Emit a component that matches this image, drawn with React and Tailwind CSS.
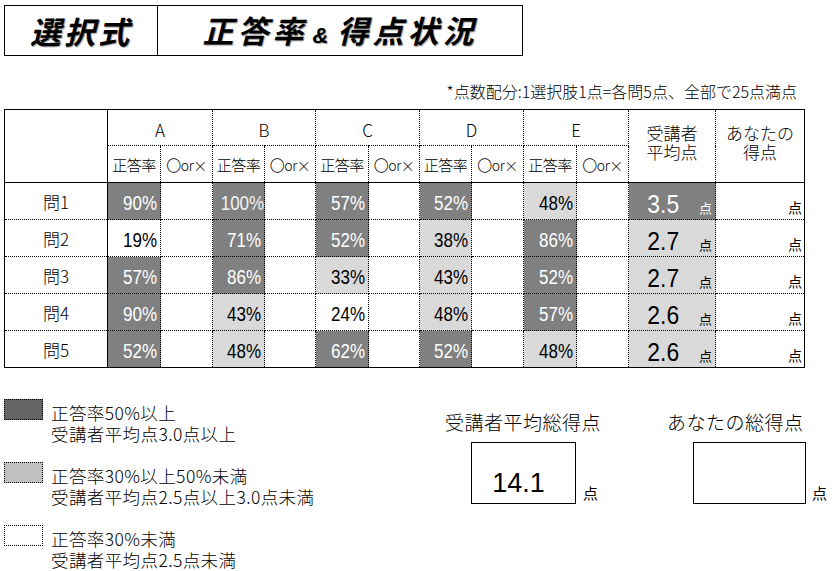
import React from "react"

const fills = {
  d: "bg-[#808080] text-white",
  l: "bg-[#d9d9d9] text-black",
  w: "bg-white text-black",
}

const rows = [
  { q: "問1", v: [[90, "d"], [100, "d"], [57, "d"], [52, "d"], [48, "l"]], avg: "3.5", ac: "d" },
  { q: "問2", v: [[19, "w"], [71, "d"], [52, "d"], [38, "l"], [86, "d"]], avg: "2.7", ac: "l" },
  { q: "問3", v: [[57, "d"], [86, "d"], [33, "l"], [43, "l"], [52, "d"]], avg: "2.7", ac: "l" },
  { q: "問4", v: [[90, "d"], [43, "l"], [24, "w"], [48, "l"], [57, "d"]], avg: "2.6", ac: "l" },
  { q: "問5", v: [[52, "d"], [48, "l"], [62, "d"], [52, "d"], [48, "l"]], avg: "2.6", ac: "l" },
]

const choices = ["A", "B", "C", "D", "E"]
const colWidths = ["w-[103px]", "w-[53px]", "w-[52px]", "w-[52px]", "w-[51px]", "w-[53px]", "w-[51px]", "w-[52px]", "w-[52px]", "w-[53px]", "w-[52px]", "w-[87px]", "w-[89px]"]

const legend = [
  { box: "bg-[#646464]", lines: ["正答率50%以上", "受講者平均点3.0点以上"] },
  { box: "bg-[#c0c0c0]", lines: ["正答率30%以上50%未満", "受講者平均点2.5点以上3.0点未満"] },
  { box: "bg-white", lines: ["正答率30%未満", "受講者平均点2.5点未満"] },
]

export default function App() {
  return (
    <div className="w-[832px] h-[571px] bg-white text-black font-['Noto_Sans_CJK_JP',sans-serif] overflow-hidden pt-[5px]">
      {/* タイトル */}
      <div className="ml-[4px] w-[519px] h-[51px] border border-black flex">
        <div className="w-[153px] border-r border-black flex items-center justify-center">
          <span className="text-[31px] leading-none font-bold italic tracking-[3px] [text-shadow:1px_1px_1px_#999]">選択式</span>
        </div>
        <div className="flex-1 flex items-center justify-center">
          <span className="text-[31px] leading-none font-bold italic tracking-[4px] [text-shadow:1px_1px_1px_#999] flex items-baseline">
            正答率
            <span className="text-[22px] mx-[5px] font-['Liberation_Sans',sans-serif]">&amp;</span>
            得点状況
          </span>
        </div>
      </div>

      <p className="mt-[25px] pr-[35px] text-right text-[16px] leading-[20px] font-light">
        *点数配分:1選択肢1点=各問5点、全部で25点満点
      </p>

      {/* 表 */}
      <table className="ml-[4px] mt-[8px] w-[801px] table-fixed border-collapse border border-black">
        <colgroup>
          {colWidths.map((w, i) => <col key={i} className={w} />)}
        </colgroup>
        <thead>
          <tr className="h-[36px]">
            <td rowSpan={2} className="border border-solid border-black p-0"></td>
            {choices.map(c => (
              <td key={c} colSpan={2} className="border border-dotted border-black p-0 pt-[4px] text-center text-[17px] font-light">{c}</td>
            ))}
            <td rowSpan={2} className="border border-black [border-style:solid_dotted_solid_dotted] p-0 pb-[8px] text-center text-[17px] leading-[19px] font-light">
              受講者<br />平均点
            </td>
            <td rowSpan={2} className="border border-black [border-style:solid_dotted_solid_dotted] p-0 pb-[8px] text-center text-[17px] leading-[19px] font-light">
              あなたの<br />得点
            </td>
          </tr>
          <tr className="h-[37px]">
            {choices.map(c => (
              <React.Fragment key={c}>
                <td className="border border-black [border-style:dotted_dotted_solid_dotted] p-0 pt-[2px] text-center text-[15px] tracking-[-0.5px] font-light">正答率</td>
                <td className="border border-black [border-style:dotted_dotted_solid_dotted] p-0 pt-[2px] text-center text-[14px] tracking-[-0.5px] font-light whitespace-nowrap">
                  <span className="text-[15px]">〇</span>or×
                </td>
              </React.Fragment>
            ))}
          </tr>
        </thead>
        <tbody>
          {rows.map(r => (
            <tr key={r.q} className="h-[37px]">
              <td className="border border-black [border-style:dotted_solid_dotted_dotted] p-0 pt-[2px] text-center text-[17px] font-light">{r.q}</td>
              {r.v.map(([pct, f], i) => (
                <React.Fragment key={i}>
                  <td className={`border border-dotted border-black p-0 pt-[3px] pr-[3px] text-right ${fills[f]}`}>
                    <span className={`inline-block origin-right scale-x-[0.85] text-[20px] leading-[24px] font-['Liberation_Sans',sans-serif] ${pct === 100 ? "text-[#f2f2f2]" : ""}`}>
                      {pct}%
                    </span>
                  </td>
                  <td className="border border-dotted border-black p-0"></td>
                </React.Fragment>
              ))}
              <td className={`border border-dotted border-black p-0 ${fills[r.ac]}`}>
                <div className="flex items-baseline justify-end pr-[3px] pt-[5px]">
                  <span className="inline-block origin-right scale-x-[0.88] text-[26px] leading-[28px] font-['Liberation_Sans',sans-serif]">{r.avg}</span>
                  <span className="ml-[20px] text-[13px] leading-[14px]">点</span>
                </div>
              </td>
              <td className="border border-dotted border-black p-0 pr-[2px] pt-[12px] text-right text-[14px] leading-[16px]">点</td>
            </tr>
          ))}
        </tbody>
      </table>

      {/* 凡例と総得点 */}
      <div className="flex mt-[31px]">
        <div className="ml-[4px] w-[441px] flex flex-col gap-[18px]">
          {legend.map((l, i) => (
            <div key={i} className="flex items-start">
              <div className={`w-[39px] h-[21px] border border-dotted border-black ${l.box}`}></div>
              <div className="ml-[8px] mt-[3px] text-[17.5px] leading-[21px] tracking-[0.4px] font-light whitespace-nowrap">
                {l.lines.map(t => <div key={t}>{t}</div>)}
              </div>
            </div>
          ))}
        </div>

        <div className="w-[222px] mt-[11px]">
          <div className="text-[19px] leading-[24px] tracking-[0.5px] font-light whitespace-nowrap">受講者平均総得点</div>
          <div className="flex items-end mt-[8px]">
            <div className="ml-[26px] w-[105px] h-[62px] border border-black flex items-end justify-center pb-[6px] pr-[10px]">
              <span className="text-[27px] leading-none font-['Liberation_Sans',sans-serif]">14.1</span>
            </div>
            <span className="ml-[7px] mb-[4px] text-[15px] leading-none">点</span>
          </div>
        </div>

        <div className="mt-[11px]">
          <div className="text-[19px] leading-[24px] tracking-[0.5px] font-light whitespace-nowrap">あなたの総得点</div>
          <div className="flex items-end mt-[8px]">
            <div className="ml-[26px] w-[113px] h-[62px] border border-black"></div>
            <span className="ml-[6px] mb-[4px] text-[15px] leading-none">点</span>
          </div>
        </div>
      </div>
    </div>
  )
}
